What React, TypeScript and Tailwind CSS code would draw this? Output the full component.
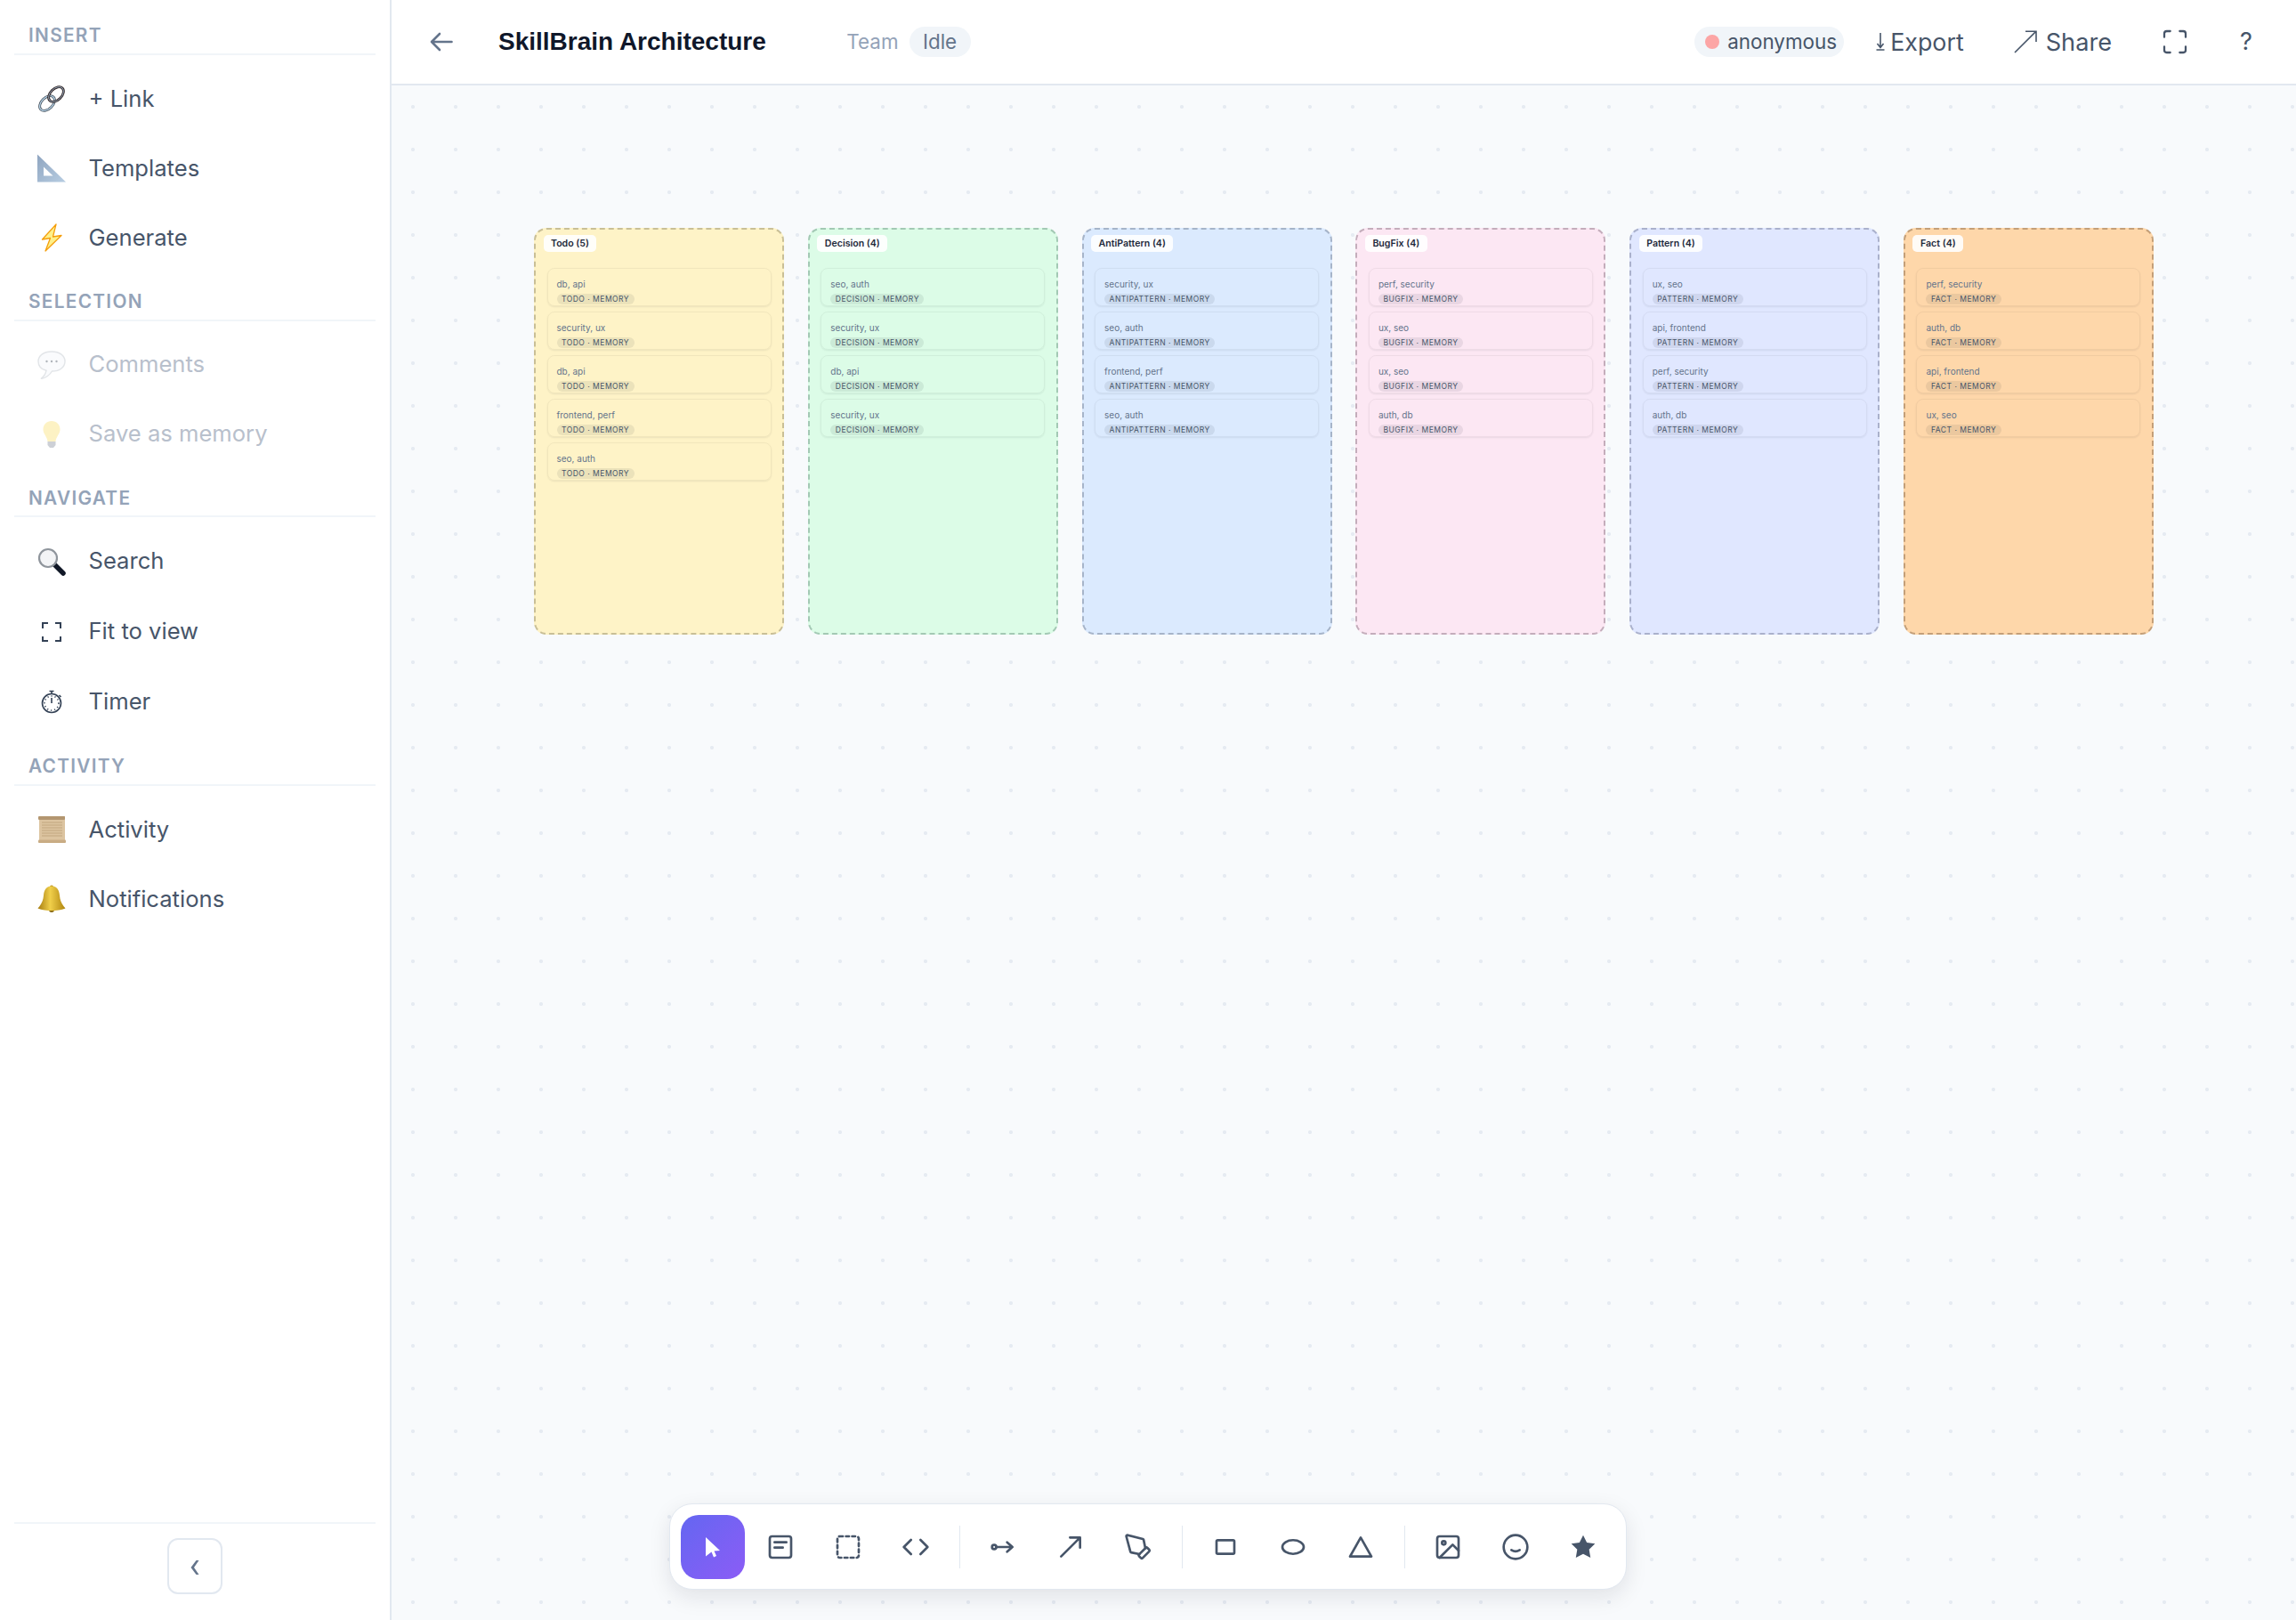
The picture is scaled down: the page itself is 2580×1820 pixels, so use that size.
import type { ReactNode } from 'react';
import { Code, Maximize } from 'lucide-react';

const columns = [
  {
    title: 'Todo (5)',
    kind: 'TODO',
    box: 'bg-[#fef3c7] border-[#c9bf96]',
    rows: ['db, api', 'security, ux', 'db, api', 'frontend, perf', 'seo, auth'],
  },
  {
    title: 'Decision (4)',
    kind: 'DECISION',
    box: 'bg-[#dcfce7] border-[#a3c9b4]',
    rows: ['seo, auth', 'security, ux', 'db, api', 'security, ux'],
  },
  {
    title: 'AntiPattern (4)',
    kind: 'ANTIPATTERN',
    box: 'bg-[#dbeafe] border-[#a6b4c9]',
    rows: ['security, ux', 'seo, auth', 'frontend, perf', 'seo, auth'],
  },
  {
    title: 'BugFix (4)',
    kind: 'BUGFIX',
    box: 'bg-[#fce7f3] border-[#c4adbb]',
    rows: ['perf, security', 'ux, seo', 'ux, seo', 'auth, db'],
  },
  {
    title: 'Pattern (4)',
    kind: 'PATTERN',
    box: 'bg-[#e0e7ff] border-[#aab1cc]',
    rows: ['ux, seo', 'api, frontend', 'perf, security', 'auth, db'],
  },
  {
    title: 'Fact (4)',
    kind: 'FACT',
    box: 'bg-[#fed7aa] border-[#c49f78]',
    rows: ['perf, security', 'auth, db', 'api, frontend', 'ux, seo'],
  },
];

function LinkEmoji() {
  return (
    <svg width="32" height="32" viewBox="0 0 32 32" fill="none">
      <g transform="rotate(-45 11 21)">
        <ellipse cx="11" cy="21" rx="10" ry="6.4" stroke="#3f4a55" strokeWidth="2.8" />
        <ellipse cx="11" cy="21" rx="10" ry="6.4" stroke="#b5d0e4" strokeWidth="1.3" />
      </g>
      <g transform="rotate(-45 21 11)">
        <ellipse cx="21" cy="11" rx="10" ry="6.4" stroke="#2f2222" strokeWidth="2.8" />
        <ellipse cx="21" cy="11" rx="10" ry="6.4" stroke="#9fb7cc" strokeWidth="0.9" />
      </g>
    </svg>
  );
}

function RulerEmoji() {
  return (
    <svg width="32" height="32" viewBox="0 0 32 32">
      <defs>
        <linearGradient id="ruler" x1="0" y1="0" x2="1" y2="1">
          <stop offset="0" stopColor="#8fa5c0" />
          <stop offset="1" stopColor="#b7cde2" />
        </linearGradient>
      </defs>
      <path d="M0 0.5 L32 31.5 H0 Z" fill="url(#ruler)" />
      <path d="M7 14.5 L17.5 24.5 H7 Z" fill="#ffffff" />
    </svg>
  );
}

function BoltEmoji() {
  return (
    <svg width="32" height="32" viewBox="0 0 32 32">
      <path
        d="M21 1 L5.5 18 L14.5 16.5 L9 31 L27 13.5 L17.5 15 Z"
        fill="#fef08a"
        stroke="#f59e0b"
        strokeWidth="1.3"
        strokeLinejoin="round"
      />
    </svg>
  );
}

function BubbleEmoji() {
  return (
    <svg width="32" height="32" viewBox="0 0 32 32" className="opacity-60">
      <path
        d="M16 1 C7 1 1 5.5 1 12 C1 17 4.5 21 10 22.3 C9.5 25 8.5 28 4 31.5 C10 30.5 14 27 16.5 23 C25 23 31 18.5 31 12 C31 5.5 25 1 16 1 Z"
        fill="#f8fafc"
        stroke="#cfd4da"
        strokeWidth="1.4"
      />
      <circle cx="10.5" cy="12" r="1.2" fill="#7c8590" />
      <circle cx="16" cy="12" r="1.2" fill="#7c8590" />
      <circle cx="21.5" cy="12" r="1.2" fill="#7c8590" />
    </svg>
  );
}

function BulbEmoji() {
  return (
    <svg width="32" height="32" viewBox="0 0 32 32" className="opacity-50">
      <path
        d="M16 1 C10.5 1 6.5 5 6.5 10.5 C6.5 15.5 11 18.5 11.5 24 H20.5 C21 18.5 25.5 15.5 25.5 10.5 C25.5 5 21.5 1 16 1 Z"
        fill="#fde68a"
      />
      <path d="M11.5 24 H20.5 V28 L18 31 H14 L11.5 28 Z" fill="#9ca3af" />
    </svg>
  );
}

function GlassEmoji() {
  return (
    <svg width="32" height="32" viewBox="0 0 32 32">
      <path d="M19 19 L29 29" stroke="#111827" strokeWidth="5.5" strokeLinecap="round" />
      <circle cx="12" cy="12" r="10" fill="#f3f4f6" stroke="#8f959c" strokeWidth="2.2" />
    </svg>
  );
}

function FitEmoji() {
  return (
    <svg width="32" height="32" viewBox="0 0 32 32" fill="none" stroke="#334155" strokeWidth="2">
      <path d="M12 6 H6 V12 M20 6 H26 V12 M26 21 V26 H20 M6 21 V26 H12" />
    </svg>
  );
}

function WatchEmoji() {
  return (
    <svg width="32" height="32" viewBox="0 0 32 32" fill="none" stroke="#334155">
      <circle cx="16" cy="17" r="10.5" strokeWidth="1.6" />
      <circle cx="16" cy="17" r="8" strokeWidth="1.6" strokeDasharray="1.2 2.9" />
      <path d="M16 6.5 V4 M13.5 3.5 H18.5 M16 17 V11" strokeWidth="1.6" />
      <path d="M24.5 8 L26.5 10" strokeWidth="1.6" />
    </svg>
  );
}

function ScrollEmoji() {
  return (
    <svg width="32" height="32" viewBox="0 0 32 32">
      <rect x="2" y="1" width="29" height="30" fill="#dcc4a0" />
      <rect x="1" y="1" width="30" height="4" rx="1" fill="#b39670" />
      <rect x="1" y="27.5" width="31" height="3.5" rx="1" fill="#c9ac84" />
      <g stroke="#c2a67f" strokeWidth="1">
        <path d="M5 8 H28 M5 11 H28 M5 14 H28 M5 17 H28 M5 20 H28 M5 23 H28" />
      </g>
    </svg>
  );
}

function BellEmoji() {
  return (
    <svg width="32" height="32" viewBox="0 0 32 32">
      <defs>
        <linearGradient id="bell" x1="0" y1="0" x2="1" y2="0">
          <stop offset="0" stopColor="#a67c10" />
          <stop offset="0.45" stopColor="#f0cf4a" />
          <stop offset="1" stopColor="#b0850f" />
        </linearGradient>
      </defs>
      <circle cx="16" cy="28" r="3" fill="#8a6a10" />
      <circle cx="16" cy="2.5" r="2" fill="#b68f1c" />
      <path
        d="M16 1.5 C10 1.5 7.5 6 7 12 C6.5 18 4.5 22 0.5 26.5 C5 28.5 11 29 16 29 C21 29 27 28.5 31.5 26.5 C27.5 22 25.5 18 25 12 C24.5 6 22 1.5 16 1.5 Z"
        fill="url(#bell)"
      />
    </svg>
  );
}

function NavItem({
  icon,
  label,
  muted,
  tall,
}: {
  icon: ReactNode;
  label: string;
  muted?: boolean;
  tall?: boolean;
}) {
  return (
    <div className={`mx-4 flex items-center gap-[25.5px] pl-[26px] ${tall ? 'h-[79px]' : 'h-[78px]'}`}>
      <span className="flex h-8 w-8 items-center justify-center">{icon}</span>
      <span className={`text-[25.6px] ${muted ? 'text-[#b8c0cc]' : 'text-[#475569]'}`}>{label}</span>
    </div>
  );
}

function SectionTitle({ children }: { children: string }) {
  return (
    <div className="mx-4 flex h-[41px] items-center border-b-2 border-[#f1f5f9] pl-4 pb-[1px] mb-[10px] text-[20.8px] font-semibold tracking-[1.3px] text-[#94a3b8]">
      {children}
    </div>
  );
}

function Sidebar() {
  return (
    <aside className="flex h-full w-[440px] shrink-0 flex-col border-r-2 border-[#e2e8f0] bg-white pt-[21px]">
      <section className="mb-[13.6px]">
        <SectionTitle>INSERT</SectionTitle>
        <NavItem icon={<LinkEmoji />} label="+ Link" />
        <NavItem icon={<RulerEmoji />} label="Templates" />
        <NavItem icon={<BoltEmoji />} label="Generate" />
      </section>
      <section className="mb-[13.6px]">
        <SectionTitle>SELECTION</SectionTitle>
        <NavItem icon={<BubbleEmoji />} label="Comments" muted />
        <NavItem icon={<BulbEmoji />} label="Save as memory" muted />
      </section>
      <section className="mb-[13.6px]">
        <SectionTitle>NAVIGATE</SectionTitle>
        <NavItem icon={<GlassEmoji />} label="Search" tall />
        <NavItem icon={<FitEmoji />} label="Fit to view" tall />
        <NavItem icon={<WatchEmoji />} label="Timer" tall />
      </section>
      <section>
        <SectionTitle>ACTIVITY</SectionTitle>
        <NavItem icon={<ScrollEmoji />} label="Activity" />
        <NavItem icon={<BellEmoji />} label="Notifications" />
      </section>
      <div className="mx-4 mt-auto flex justify-center border-t-2 border-[#f1f5f9] pt-[16px] pb-[29px]">
        <button className="flex h-[63px] w-[62px] items-center justify-center rounded-xl border-2 border-[#e2e8f0]">
          <svg width="10" height="16" viewBox="0 0 10 16" className="mt-[3px]">
            <path d="M6.5 0 H9.5 L4 8 L9.5 16 H6.5 L0.5 8 Z" fill="#64748b" />
          </svg>
        </button>
      </div>
    </aside>
  );
}

function Header() {
  return (
    <header className="flex h-[96px] shrink-0 items-center border-b-2 border-[#e2e8f0] bg-white pl-[43px] pr-[49px]">
      <svg width="26" height="22" viewBox="0 0 26 22" fill="none" stroke="#64748b" strokeWidth="2.6" strokeLinecap="round" strokeLinejoin="round">
        <path d="M24.5 11 H2 M11 2 L2 11 L11 20" />
      </svg>
      <h1 className="ml-[51px] font-['Liberation_Sans',sans-serif] text-[28px] font-bold text-[#0f172a]">
        SkillBrain Architecture
      </h1>
      <span className="ml-[90.5px] text-[22.4px] text-[#94a3b8]">Team</span>
      <span className="ml-3 flex h-[34px] w-[69px] items-center justify-center rounded-full bg-[#f1f5f9] text-[22.4px] text-[#64748b]">
        Idle
      </span>
      <div className="ml-auto flex h-[34px] w-[168px] items-center gap-[9px] rounded-full bg-[#f1f5f9] pl-3 text-[22.4px] text-[#475569]">
        <span className="h-4 w-4 rounded-full bg-[#fca5a5]" />
        anonymous
      </div>
      <div className="ml-[36px] flex items-center gap-[6px] text-[26.8px] text-[#475569]">
        <svg width="10" height="20" viewBox="0 0 10 20" fill="none" stroke="#475569" strokeWidth="1.6">
          <path d="M5 0 V16 M1.5 12 L5 16.5 L8.5 12 M0.5 19 H9.5" />
        </svg>
        Export
      </div>
      <div className="ml-[56px] flex items-center gap-[10px] text-[27.2px] text-[#475569]">
        <svg width="26" height="26" viewBox="0 0 26 26" fill="none" stroke="#475569" strokeWidth="1.6">
          <path d="M1 25 L25 1 M13 1.2 H25 V13" />
        </svg>
        <span className="mt-[3px]">Share</span>
      </div>
      <Maximize size={32} strokeWidth={1.7} color="#475569" className="ml-[55px]" />
      <span className="ml-[57px] text-[27.2px] text-[#475569]">?</span>
    </header>
  );
}

function Column({ title, kind, box, rows }: (typeof columns)[number]) {
  return (
    <div className={`h-[457px] w-[281px] rounded-[14px] border-2 border-dashed pl-[8.5px] pr-[12.5px] pt-[6px] ${box}`}>
      <div className="flex h-[19px] w-fit items-center rounded-[5px] bg-white/90 px-[8.5px] text-[10.6px] font-semibold text-[#1e293b]">
        {title}
      </div>
      <div className="ml-[4px] mt-[17.7px] flex flex-col gap-[6px]">
        {rows.map((row, i) => (
          <div
            key={i}
            className="h-[43px] overflow-hidden rounded-[8px] border border-black/5 pl-[10px] pt-[11px] shadow-[0_1px_2px_rgba(15,23,42,0.08)]"
          >
            <div className="h-3 text-[10px] leading-3 text-[#64748b]">{row}</div>
            <div className="mt-[5.5px] flex h-3 w-fit items-center rounded-full bg-[#0f172a]/8 px-[5.5px] text-[8.5px] tracking-[0.5px] text-[#475569]">
              {kind} · MEMORY
            </div>
          </div>
        ))}
      </div>
    </div>
  );
}

function ToolIcon({ children }: { children: ReactNode }) {
  return (
    <button className="flex h-[72px] w-[72px] items-center justify-center">
      <svg width="32" height="32" viewBox="0 0 24 24" fill="none" stroke="#475569" strokeWidth="2" strokeLinecap="round" strokeLinejoin="round">
        {children}
      </svg>
    </button>
  );
}

function Divider() {
  return <span className="mx-[8.5px] h-12 w-px bg-[#e2e8f0]" />;
}

function Toolbar() {
  return (
    <div className="absolute bottom-[34px] left-1/2 flex h-[97px] w-[1076px] -translate-x-1/2 items-center gap-1 rounded-[26px] border border-[#e2e8f0] bg-white pl-[12px] shadow-[0_8px_24px_rgba(15,23,42,0.10)]">
      <button className="flex h-[72px] w-[72px] items-center justify-center rounded-[20px] bg-gradient-to-br from-[#6366f1] to-[#8b5cf6]">
        <svg width="18" height="24" viewBox="0 0 18 24">
          <path d="M1 1 L17 16 L10.5 16.5 L13 22 L10 23.5 L7.5 17.5 L1 22.5 Z" fill="#ffffff" />
        </svg>
      </button>
      <ToolIcon>
        <rect x="3" y="3" width="18" height="18" rx="2" />
        <path d="M7 8 H17 M7 12.5 H14" />
      </ToolIcon>
      <ToolIcon>
        <rect x="3" y="3" width="18" height="18" rx="2" strokeDasharray="2.6 2.6" />
      </ToolIcon>
      <button className="flex h-[72px] w-[72px] items-center justify-center">
        <Code size={32} color="#475569" />
      </button>
      <Divider />
      <ToolIcon>
        <circle cx="4.6" cy="12" r="1.8" />
        <path d="M6.4 12 H20 M15.5 8 L20 12 L15.5 16" />
      </ToolIcon>
      <ToolIcon>
        <path d="M4 20 L20 4 M11.5 4 H20 V12.5" />
      </ToolIcon>
      <ToolIcon>
        <path d="M15.7 21.3a1 1 0 0 1-1.4 0l-1.6-1.6a1 1 0 0 1 0-1.4l5.6-5.6a1 1 0 0 1 1.4 0l1.6 1.6a1 1 0 0 1 0 1.4z" />
        <path d="m18 13-1.4-6.9a1 1 0 0 0-.7-.8L3.2 2a1 1 0 0 0-1.2 1.2L5.4 15.9a1 1 0 0 0 .7.7L13 18" />
      </ToolIcon>
      <Divider />
      <ToolIcon>
        <rect x="4.5" y="6.25" width="15" height="11.5" rx="1" />
      </ToolIcon>
      <ToolIcon>
        <ellipse cx="12" cy="12" rx="9" ry="5.8" />
      </ToolIcon>
      <ToolIcon>
        <path d="M12 4 L21 20 H3 Z" />
      </ToolIcon>
      <Divider />
      <ToolIcon>
        <rect x="3" y="3" width="18" height="18" rx="2" />
        <circle cx="8.5" cy="8.5" r="1.5" />
        <path d="M21 15 L16 10 L5 21" />
      </ToolIcon>
      <ToolIcon>
        <circle cx="12" cy="12" r="10" />
        <path d="M8.5 14.5 Q12 16.8 15.5 14.5" />
      </ToolIcon>
      <ToolIcon>
        <polygon points="12,2 15.09,8.26 22,9.27 17,14.14 18.18,21.02 12,17.77 5.82,21.02 7,14.14 2,9.27 8.91,8.26" fill="#475569" stroke="none" />
      </ToolIcon>
    </div>
  );
}

export default function App() {
  return (
    <div className="relative flex h-[1820px] w-[2580px] overflow-hidden font-['Inter',sans-serif]">
      <Sidebar />
      <main className="flex min-w-0 flex-1 flex-col">
        <Header />
        {/* canvas */}
        <div className="flex flex-1 items-start gap-[26.8px] bg-[#f8fafc] bg-[radial-gradient(circle,#e6ebf2_1.8px,transparent_2.4px)] bg-[length:48px_48px] pl-[160px] pt-[160px]">
          {columns.map((col) => (
            <Column key={col.kind} {...col} />
          ))}
        </div>
      </main>
      <Toolbar />
    </div>
  );
}
